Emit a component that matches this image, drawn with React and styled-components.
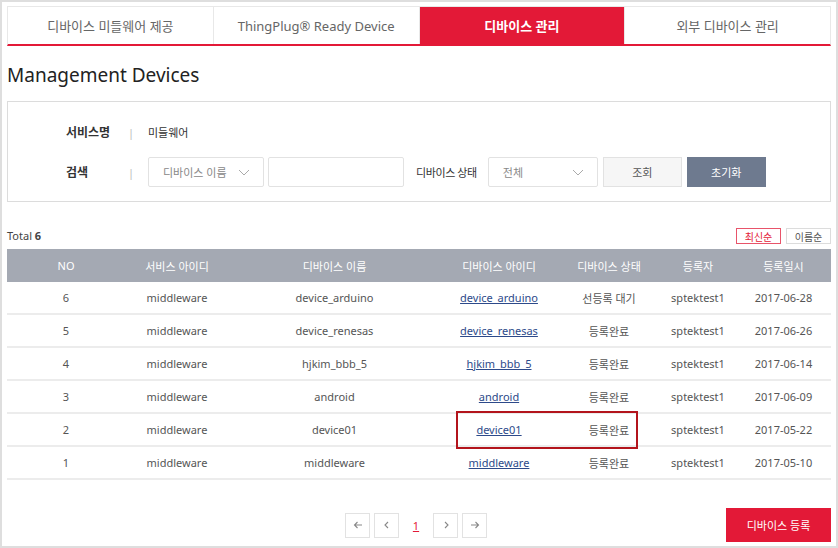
import React from 'react'
import styled, { createGlobalStyle } from 'styled-components'

const GlobalStyle = createGlobalStyle`
  body {
    margin: 0;
    font-family: "Noto Sans", "Noto Sans CJK KR", sans-serif;
    background: #fff;
  }
`

const Frame = styled.div`
  width: 838px;
  height: 548px;
  box-sizing: border-box;
  border: 2px solid #dedede;
  padding: 4px 5px 0 5px;
  overflow: hidden;
`
const Tabs = styled.div`
  display: flex;
  height: 40px;
  box-sizing: border-box;
  border: 1px solid #e8e8e8;
  border-bottom: 2px solid #e31937;
`
const Tab = styled.div`
  flex: 1;
  display: flex;
  align-items: center;
  justify-content: center;
  font-size: 13px;
  color: ${p => (p.active ? '#fff' : '#666')};
  font-weight: ${p => (p.active ? 700 : 400)};
  background: ${p => (p.active ? '#e31937' : '#fff')};
  border-right: 1px solid #e8e8e8;
  &:last-child { border-right: none; }
`
const Title = styled.h1`
  margin: 16px 0 0 0;
  font-size: 19px;
  font-weight: 400;
  color: #222;
  line-height: 26px;
`
const SearchPanel = styled.div`
  margin-top: 13px;
  border: 1px solid #dcdcdc;
  height: 101px;
  box-sizing: border-box;
  padding: 15px 0 0 58px;
  display: flex;
  flex-direction: column;
  gap: 10px;
`
const SearchRow = styled.div`
  display: flex;
  align-items: center;
  height: 30px;
`
const Label = styled.div`
  width: 62px;
  font-size: 12px;
  font-weight: 700;
  color: #333;
`
const Sep = styled.div`
  width: 20px;
  font-size: 11px;
  color: #bbb;
`
const Value = styled.div`
  font-size: 11px;
  color: #333;
`
const Select = styled.div`
  width: ${p => p.w}px;
  height: 30px;
  box-sizing: border-box;
  border: 1px solid #e2e2e2;
  border-radius: 2px;
  display: flex;
  align-items: center;
  justify-content: space-between;
  padding: 0 13px 0 14px;
  font-size: 11px;
  color: #888;
`
const Input = styled.div`
  width: 136px;
  height: 30px;
  margin-left: 4px;
  box-sizing: border-box;
  border: 1px solid #e2e2e2;
  border-radius: 2px;
`
const InlineLabel = styled.div`
  font-size: 11px;
  letter-spacing: -0.4px;
  color: #333;
  margin: 0 11px 0 12px;
`
const Button = styled.div`
  width: 79px;
  height: 30px;
  box-sizing: border-box;
  display: flex;
  align-items: center;
  justify-content: center;
  font-size: 11px;
  margin-left: 5px;
  border: 1px solid ${p => (p.primary ? '#6e7a8f' : '#e2e2e2')};
  background: ${p => (p.primary ? '#6e7a8f' : '#f6f6f6')};
  color: ${p => (p.primary ? '#fff' : '#555')};
`
const ListBar = styled.div`
  display: flex;
  align-items: center;
  justify-content: space-between;
  margin-top: 26px;
  height: 16px;
`
const Total = styled.div`
  font-size: 11px;
  color: #444;
  margin-top: -2px;
  b { font-weight: 700; }
`
const Sorts = styled.div`
  display: flex;
  gap: 5px;
`
const SortBtn = styled.div`
  width: 45px;
  height: 16px;
  box-sizing: border-box;
  display: flex;
  align-items: center;
  justify-content: center;
  font-size: 10px;
  border: 1px solid ${p => (p.on ? '#e8546a' : '#dcdcdc')};
  color: ${p => (p.on ? '#e31937' : '#555')};
`
const TableWrap = styled.div`
  position: relative;
  margin-top: 5px;
`
const Table = styled.table`
  width: 100%;
  border-collapse: collapse;
  table-layout: fixed;
  font-size: 11px;
`
const Th = styled.th`
  height: 33px;
  background: #a4a9b3;
  color: #fff;
  font-weight: 400;
  padding: 0;
`
const Td = styled.td`
  height: 31px;
  text-align: center;
  color: #555;
  border-bottom: 2px solid #ececec;
  padding: 0;
`
const Link = styled.a`
  color: #2d4a8a;
  text-decoration: underline;
`
const Highlight = styled.div`
  position: absolute;
  left: 449px;
  top: 162px;
  width: 182px;
  height: 38px;
  box-sizing: border-box;
  border: 2px solid #b3141c;
  pointer-events: none;
`
const Footer = styled.div`
  display: grid;
  grid-template-columns: 1fr auto 1fr;
  align-items: center;
  margin-top: 28px;
`
const Pager = styled.div`
  grid-column: 2;
  display: flex;
  align-items: center;
  gap: 4px;
  margin-right: 6px;
`
const PageBtn = styled.div`
  width: 25px;
  height: 25px;
  box-sizing: border-box;
  border: 1px solid #e2e2e2;
  display: flex;
  align-items: center;
  justify-content: center;
`
const PageNum = styled.div`
  width: 26px;
  text-align: center;
  font-size: 11px;
  color: #e31937;
  text-decoration: underline;
`
const Register = styled.div`
  justify-self: end;
  width: 105px;
  height: 34px;
  display: flex;
  align-items: center;
  justify-content: center;
  background: #e31937;
  color: #fff;
  font-size: 11px;
`

const Chevron = () => (
  <svg width="12" height="7" viewBox="0 0 12 7">
    <path d="M1 1l5 5 5-5" fill="none" stroke="#aaa" strokeWidth="1" />
  </svg>
)

const Arrow = ({ d }) => (
  <svg width="10" height="10" viewBox="0 0 10 10">
    <path d={d} fill="none" stroke="#888" strokeWidth="1.1" />
  </svg>
)

const columns = [
  ['NO', 118],
  ['서비스 아이디', 104],
  ['디바이스 이름', 211],
  ['디바이스 아이디', 118],
  ['디바이스 상태', 102],
  ['등록자', 76],
  ['등록일시', 95],
]

const rows = [
  [6, 'middleware', 'device_arduino', 'device_arduino', '선등록 대기', 'sptektest1', '2017-06-28'],
  [5, 'middleware', 'device_renesas', 'device_renesas', '등록완료', 'sptektest1', '2017-06-26'],
  [4, 'middleware', 'hjkim_bbb_5', 'hjkim_bbb_5', '등록완료', 'sptektest1', '2017-06-14'],
  [3, 'middleware', 'android', 'android', '등록완료', 'sptektest1', '2017-06-09'],
  [2, 'middleware', 'device01', 'device01', '등록완료', 'sptektest1', '2017-05-22'],
  [1, 'middleware', 'middleware', 'middleware', '등록완료', 'sptektest1', '2017-05-10'],
]

const tabs = ['디바이스 미들웨어 제공', 'ThingPlug® Ready Device', '디바이스 관리', '외부 디바이스 관리']

export default function App() {
  return (
    <Frame>
      <GlobalStyle />
      <Tabs>
        {tabs.map((t, i) => <Tab key={t} active={i === 2}>{t}</Tab>)}
      </Tabs>
      <Title>Management Devices</Title>
      <SearchPanel>
        <SearchRow>
          <Label>서비스명</Label>
          <Sep>|</Sep>
          <Value>미들웨어</Value>
        </SearchRow>
        <SearchRow>
          <Label>검색</Label>
          <Sep>|</Sep>
          <Select w={116}>디바이스 이름 <Chevron /></Select>
          <Input />
          <InlineLabel>디바이스 상태</InlineLabel>
          <Select w={110}>전체 <Chevron /></Select>
          <Button>조회</Button>
          <Button primary>초기화</Button>
        </SearchRow>
      </SearchPanel>
      <ListBar>
        <Total>Total <b>6</b></Total>
        <Sorts>
          <SortBtn on>최신순</SortBtn>
          <SortBtn>이름순</SortBtn>
        </Sorts>
      </ListBar>
      <TableWrap>
        <Table>
          <colgroup>
            {columns.map(([n, w]) => <col key={n} style={{ width: w }} />)}
          </colgroup>
          <thead>
            <tr>{columns.map(([n]) => <Th key={n}>{n}</Th>)}</tr>
          </thead>
          <tbody>
            {rows.map(r => (
              <tr key={r[0]}>
                <Td>{r[0]}</Td>
                <Td>{r[1]}</Td>
                <Td>{r[2]}</Td>
                <Td><Link>{r[3]}</Link></Td>
                <Td>{r[4]}</Td>
                <Td>{r[5]}</Td>
                <Td>{r[6]}</Td>
              </tr>
            ))}
          </tbody>
        </Table>
        <Highlight />
      </TableWrap>
      <Footer>
        <Pager>
          <PageBtn><Arrow d="M9 5H1.5M4.5 2L1.5 5l3 3" /></PageBtn>
          <PageBtn><Arrow d="M6 2L3 5l3 3" /></PageBtn>
          <PageNum>1</PageNum>
          <PageBtn><Arrow d="M4 2l3 3-3 3" /></PageBtn>
          <PageBtn><Arrow d="M1 5h7.5M5.5 2l3 3-3 3" /></PageBtn>
        </Pager>
        <Register>디바이스 등록</Register>
      </Footer>
    </Frame>
  )
}
